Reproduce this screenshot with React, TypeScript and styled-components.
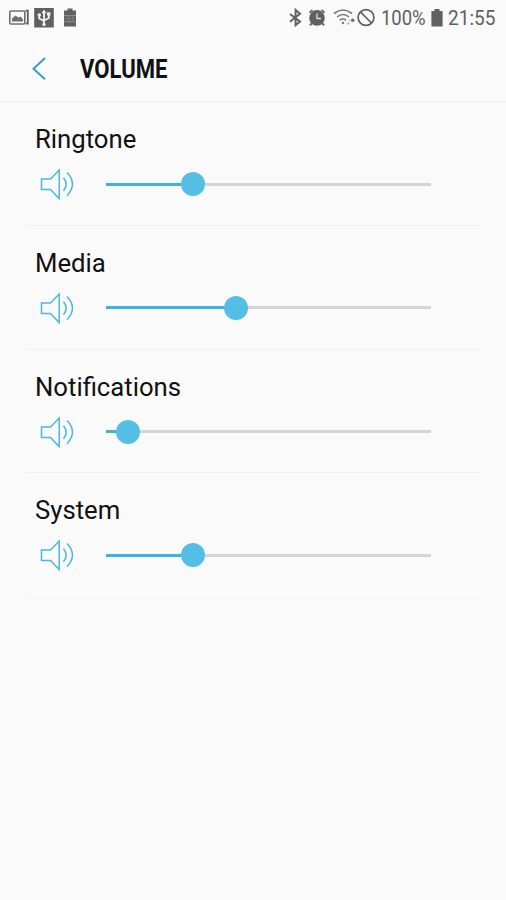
import React from "react";
import styled, { createGlobalStyle } from "styled-components";

const GlobalStyle = createGlobalStyle`
  * { box-sizing: border-box; }
  body { margin: 0; background: #fafafa; font-family: Roboto, "Liberation Sans", sans-serif; }
`;

const Screen = styled.div`
  width: 506px;
  height: 900px;
  overflow: hidden;
  background: #fafafa;
  color: #111;
`;

const StatusBar = styled.div`
  display: flex;
  justify-content: space-between;
  height: 36px;
  padding: 0 10px 0 8px;
  color: #606060;
`;

const StatusGroup = styled.div`
  display: flex;
  align-items: center;
  height: 36px;
`;

const StatusText = styled.span<{ $width: number; $scale: number }>`
  width: ${(p) => p.$width}px;
  font-size: 20.5px;
  line-height: 36px;
  white-space: nowrap;
  transform: scaleX(${(p) => p.$scale});
  transform-origin: left center;
`;

const Header = styled.header`
  display: flex;
  align-items: center;
  height: 66px;
  padding: 1px 0 0 31px;
  border-bottom: 1px solid #efefef;
`;

const BackButton = styled.button`
  display: flex;
  width: 49px;
  padding: 0;
  border: 0;
  background: none;
`;

const Title = styled.h1`
  margin: 0;
  font-size: 26px;
  font-weight: 700;
  line-height: 32px;
  color: #111;
  transform: scaleX(0.85);
  transform-origin: left center;
`;

const Rows = styled.main`
  padding: 0 26px;
`;

const Row = styled.section`
  height: 123.8px;
  padding: 21px 0 0 9px;
  border-bottom: 1px solid #f0f0f0;

  &:last-child { height: 125px; border-bottom-color: #f6f6f6; }
`;

const Label = styled.div`
  height: 32px;
  font-size: 26px;
  line-height: 32px;
  transform: scaleX(0.988);
  transform-origin: left center;
`;

const Control = styled.div`
  display: flex;
  align-items: center;
  height: 58px;
  padding-left: 5px;
`;

const Track = styled.div`
  display: flex;
  align-items: center;
  width: 325px;
  height: 24px;
  margin-left: 32px;
`;

const Fill = styled.div`
  height: 3px;
  background: #3db5da;
`;

const Thumb = styled.div`
  flex: none;
  width: 24px;
  height: 24px;
  border-radius: 50%;
  background: #55bee5;
`;

const Rest = styled.div`
  flex: 1;
  height: 3px;
  background: #d5d5d5;
`;

const Icon = styled.svg<{ $gap?: number }>`
  display: block;
  flex: none;
  margin-right: ${(p) => p.$gap ?? 0}px;
`;

const Speaker = () => (
  <Icon width="34" height="32" viewBox="0 0 34 32" fill="none" stroke="#4ab8df" strokeWidth="1.5">
    <path d="M1.5 10.9h9L19.2 2v28.6l-8.7-9.1h-9z" />
    <path d="M23.5 9.7q5.4 6.5 0 13M27 4.5q11 11.6 0 23.2" />
  </Icon>
);

const volumes = [
  { label: "Ringtone", thumb: 86.5 },
  { label: "Media", thumb: 130 },
  { label: "Notifications", thumb: 22 },
  { label: "System", thumb: 86.5 },
];

const VolumeRow = ({ label, thumb }: { label: string; thumb: number }) => (
  <Row>
    <Label>{label}</Label>
    <Control>
      <Speaker />
      <Track>
        <Fill style={{ width: thumb - 12 }} />
        <Thumb />
        <Rest />
      </Track>
    </Control>
  </Row>
);

export default function App() {
  return (
    <Screen>
      <GlobalStyle />
      <StatusBar>
        <StatusGroup>
          <Icon $gap={5} width="21" height="20" viewBox="0 0 21 20">
            <rect x="1.8" y="3" width="15" height="13" rx="1" fill="none" stroke="#707070" strokeWidth="1.6" />
            <path d="M4 13.5V10.5l3.5-3 3 2 2-1 2.5 3v2z" fill="#707070" />
            <path d="M17.5 2.7h2.3v13h-2" fill="none" stroke="#606060" strokeWidth="1.8" />
          </Icon>
          <Icon $gap={9} width="20" height="20" viewBox="0 0 20 20">
            <path d="M.2 0h19.6v19.5H.2z" fill="#606060" />
            <path d="M10 4v14M5.2 7v3.5l4.8 2.5M14.8 6v4L10 12.5" fill="none" stroke="#eee" strokeWidth="1.9" />
            <path d="M10 1.5l2.5 3.8h-5z" fill="#eee" />
            <circle cx="5.3" cy="7" r="1.8" fill="#eee" />
            <path d="M13 4.3h3.4v3.2H13z" fill="#eee" />
            <circle cx="10" cy="16.5" r="1.7" fill="#eee" />
          </Icon>
          <Icon width="14" height="20" viewBox="0 0 14 20">
            <path d="M4.5 0.5h5v2H13v16H1v-16h3.5z" fill="#606060" />
            <path d="M1 7.7h12M1 13.8h12" stroke="#999" />
            <path d="M3 9.5v2.5M5.3 9.5h1.5v2.5H5.3zM9 9.5h1.5v2.5H9z" fill="none" stroke="#888" strokeWidth=".8" />
          </Icon>
        </StatusGroup>
        <StatusGroup>
          <Icon $gap={6} width="13" height="20" viewBox="0 0 13 20" fill="none" stroke="#606060" strokeWidth="2">
            <path d="M1 6l10 7.6-4.4 3.6V1.9L11 5.7 1 13.8" />
          </Icon>
          <Icon $gap={7} width="18" height="20" viewBox="0 0 18 20">
            <path d="M1.5 4.8L4.6 2M16.5 4.8L13.4 2M4 15l-2 2.4M14 15l2 2.4" stroke="#707070" strokeWidth="2.2" />
            <circle cx="9" cy="9.9" r="7.8" fill="#606060" />
            <path d="M9 5.5v5h4" fill="none" stroke="#ddd" strokeWidth="1.3" />
          </Icon>
          <Icon $gap={2} width="22" height="20" viewBox="0 0 22 20" fill="none" stroke="#777" strokeWidth="1.6">
            <path d="M1 5.5q9-7 18 0M4 9q6-5 12 0M6.8 12.3q3.2-2.5 6.4 0" />
            <circle cx="10" cy="15" r="1.3" fill="#777" stroke="none" />
            <circle cx="19.7" cy="12.2" r="1.8" fill="#707070" stroke="none" />
            <path d="M14 15.5h2.5M16 12.5h1" stroke="#bbb" strokeWidth="2" />
          </Icon>
          <Icon $gap={6} width="18" height="20" viewBox="0 0 18 20" fill="none" stroke="#606060" strokeWidth="1.7">
            <circle cx="9" cy="9.5" r="7.9" />
            <path d="M3.5 4l11 11" />
          </Icon>
          <StatusText $width={50} $scale={0.9}>100%</StatusText>
          <Icon $gap={5} width="12" height="20" viewBox="0 0 12 20">
            <path d="M3.5 1h5v2H11.6v15.5H.4V3h3.1z" fill="#606060" />
          </Icon>
          <StatusText $width={48} $scale={0.93}>21:55</StatusText>
        </StatusGroup>
      </StatusBar>
      <Header>
        <BackButton aria-label="Back">
          <Icon width="16" height="24" viewBox="0 0 16 24" fill="none" stroke="#399fc2" strokeWidth="2">
            <path d="M14 1L2.5 11.7 14 22.2" />
          </Icon>
        </BackButton>
        <Title>VOLUME</Title>
      </Header>
      <Rows>
        {volumes.map((v) => (
          <VolumeRow key={v.label} {...v} />
        ))}
      </Rows>
    </Screen>
  );
}
